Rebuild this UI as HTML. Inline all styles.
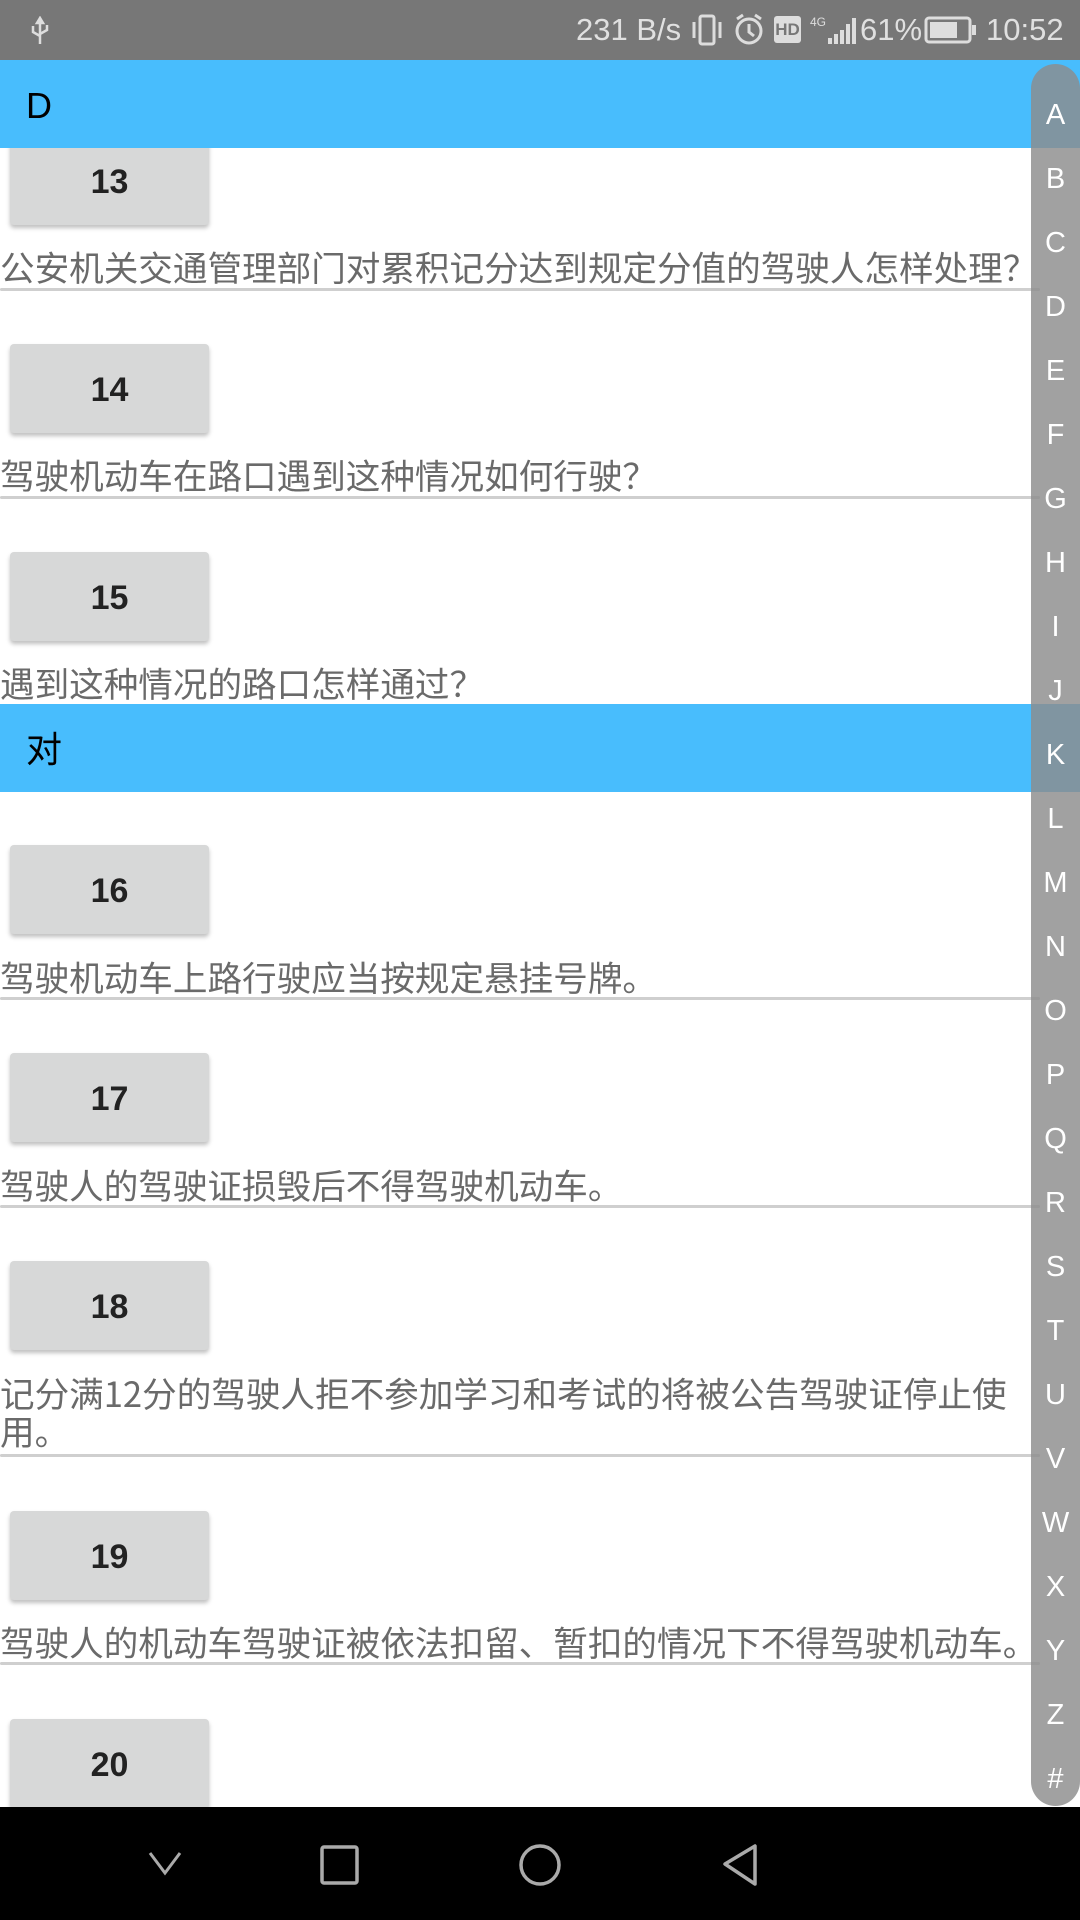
<!DOCTYPE html>
<html><head><meta charset="utf-8"><style>
*{margin:0;padding:0;box-sizing:border-box}
body{width:1080px;height:1920px;position:relative;overflow:hidden;background:#fff;font-family:"Liberation Sans","Noto Sans CJK SC",sans-serif}
.abs{position:absolute}
.sb{left:0;top:0;width:1080px;height:60px;background:#777;color:#e0e0e0;font-size:30px}
.hdr{left:0;width:1080px;height:88px;background:#48bdfd;color:#000;font-size:36px;line-height:92px;padding-left:26px}
.btn{left:10px;width:199px;height:89px;background:#d7d8d8;border-radius:4px;box-shadow:0 3px 4px rgba(0,0,0,.25);text-align:center;line-height:92px;font-size:34px;font-weight:bold;color:#222}
.txt{left:0;width:1040px;font-family:"Noto Sans CJK SC","Liberation Sans",sans-serif;font-size:34.6px;line-height:38px;color:#6a6a6a;white-space:nowrap}
.div{left:0;width:1040px;height:3px;background:#cfcfcf;border-radius:2px}
.side{left:1031px;top:64px;width:49px;height:1742px;background:rgba(140,140,140,.82);border-radius:25px}
.side div{position:absolute;left:0;width:49px;text-align:center;color:#fff;font-size:29px;height:40px;line-height:44px}
.nav{left:0;top:1807px;width:1080px;height:113px;background:#000}
</style></head><body>
<div class="abs sb">
<svg class="abs" style="left:28px;top:16px" width="24" height="30" viewBox="0 0 24 30"><path d="M12 2v26M12 2l-3 5h6zM5 10v6l7 4M19 9v5l-7 4" stroke="#ddd" stroke-width="2.5" fill="none"/></svg>
<div class="abs" style="left:576px;top:12px;font-size:31px;white-space:nowrap">231 B/s</div>
<svg class="abs" style="left:690px;top:14px" width="40" height="32"><rect x="10" y="2" width="14" height="28" rx="2" stroke="#ddd" stroke-width="3" fill="none"/><path d="M4 8v16M30 8v16" stroke="#ddd" stroke-width="3"/></svg>
<svg class="abs" style="left:733px;top:13px" width="32" height="34"><circle cx="16" cy="18" r="12" stroke="#ddd" stroke-width="3" fill="none"/><path d="M16 11v8l5 4M4 6l6-4M28 6l-6-4" stroke="#ddd" stroke-width="3" fill="none"/></svg>
<div class="abs" style="left:774px;top:16px;width:27px;height:27px;background:#ddd;border-radius:3px;color:#777;font-size:17px;font-weight:bold;text-align:center;line-height:27px">HD</div>
<svg class="abs" style="left:810px;top:14px" width="48" height="32"><text x="0" y="12" font-size="12" fill="#ddd" font-family="Liberation Sans">4G</text><path d="M20 30v-6M26 30v-10M32 30v-14M38 30v-20M44 30v-26" stroke="#ddd" stroke-width="4"/></svg>
<div class="abs" style="left:860px;top:12px;font-size:31px">61%</div>
<svg class="abs" style="left:924px;top:16px" width="54" height="28"><rect x="2" y="2" width="44" height="24" rx="3" stroke="#ddd" stroke-width="3" fill="none"/><rect x="6" y="6" width="27" height="16" fill="#ddd"/><rect x="48" y="9" width="4" height="10" fill="#ddd"/></svg>
<div class="abs" style="left:986px;top:12px;font-size:31px">10:52</div>
</div>

<div class="abs btn" style="top:136px;height:89px">13</div>
<div class="abs hdr" style="top:60px">D</div>
<div class="abs txt" style="top:247px">公安机关交通管理部门对累积记分达到规定分值的驾驶人怎样处理？</div>
<div class="abs div" style="top:288px"></div>

<div class="abs btn" style="top:344px">14</div>
<div class="abs txt" style="top:455px">驾驶机动车在路口遇到这种情况如何行驶？</div>
<div class="abs div" style="top:496px"></div>

<div class="abs btn" style="top:552px">15</div>
<div class="abs txt" style="top:663px">遇到这种情况的路口怎样通过？</div>

<div class="abs hdr" style="top:704px">对</div>

<div class="abs btn" style="top:845px">16</div>
<div class="abs txt" style="top:957px">驾驶机动车上路行驶应当按规定悬挂号牌。</div>
<div class="abs div" style="top:997px"></div>

<div class="abs btn" style="top:1053px">17</div>
<div class="abs txt" style="top:1165px">驾驶人的驾驶证损毁后不得驾驶机动车。</div>
<div class="abs div" style="top:1205px"></div>

<div class="abs btn" style="top:1261px">18</div>
<div class="abs txt" style="top:1373px">记分满12分的驾驶人拒不参加学习和考试的将被公告驾驶证停止使<br>用。</div>
<div class="abs div" style="top:1454px"></div>

<div class="abs btn" style="top:1511px">19</div>
<div class="abs txt" style="top:1622px">驾驶人的机动车驾驶证被依法扣留、暂扣的情况下不得驾驶机动车。</div>
<div class="abs div" style="top:1662px"></div>

<div class="abs btn" style="top:1719px">20</div>

<div class="abs side">
<div style="top:29px">A</div><div style="top:93px">B</div><div style="top:157px">C</div><div style="top:221px">D</div><div style="top:285px">E</div><div style="top:349px">F</div><div style="top:413px">G</div><div style="top:477px">H</div><div style="top:541px">I</div><div style="top:605px">J</div><div style="top:669px">K</div><div style="top:733px">L</div><div style="top:797px">M</div><div style="top:861px">N</div><div style="top:925px">O</div><div style="top:989px">P</div><div style="top:1053px">Q</div><div style="top:1117px">R</div><div style="top:1181px">S</div><div style="top:1245px">T</div><div style="top:1309px">U</div><div style="top:1373px">V</div><div style="top:1437px">W</div><div style="top:1501px">X</div><div style="top:1565px">Y</div><div style="top:1629px">Z</div><div style="top:1693px">#</div>
</div>

<div class="abs nav">
<svg class="abs" style="left:0;top:0" width="1080" height="113">
<path d="M150 46l15 20 15-20" stroke="#aaa" stroke-width="3" fill="none"/>
<rect x="322" y="40" width="35" height="36" rx="2" stroke="#aaa" stroke-width="3.5" fill="none"/>
<circle cx="540" cy="58" r="19" stroke="#aaa" stroke-width="3.5" fill="none"/>
<path d="M755 39v38l-30-20z" stroke="#aaa" stroke-width="3.5" fill="none" stroke-linejoin="round"/>
</svg>
</div>
</body></html>
